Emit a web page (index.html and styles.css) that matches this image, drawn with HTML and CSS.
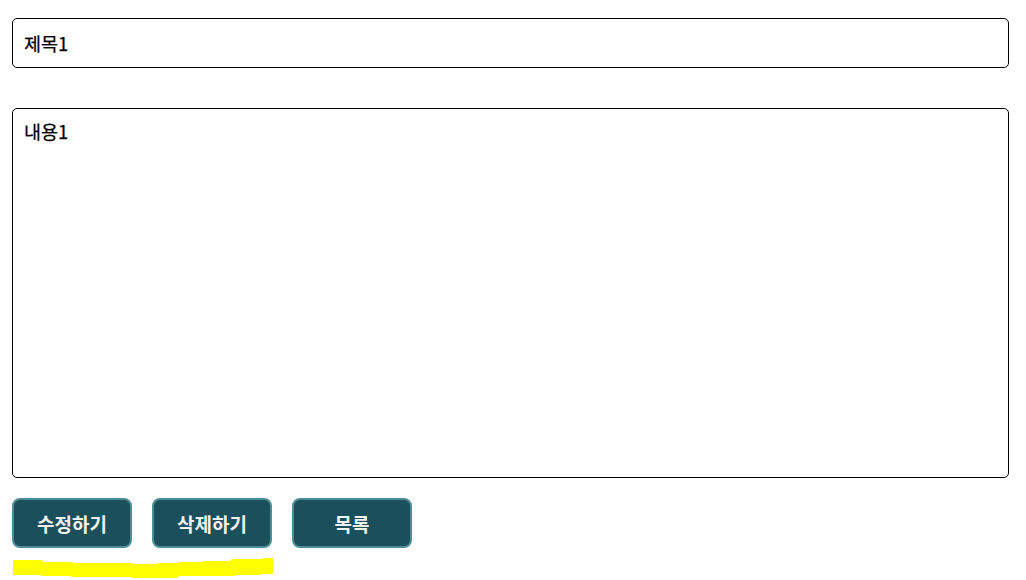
FILE: index.html
```html
<!DOCTYPE html>
<html lang="ko">
<head>
<meta charset="utf-8">
<link rel="stylesheet" href="styles.css">
</head>
<body>
<div class="page">
  <input class="title-input" type="text" value="제목1">
  <textarea class="content-input">내용1</textarea>
  <div class="actions">
    <button class="btn">수정하기</button>
    <button class="btn">삭제하기</button>
    <button class="btn">목록</button>
  </div>
  <svg class="marker" width="262" height="24" viewBox="0 0 262 24">
    <polygon fill="#ffff00" points="1,3 30,3 32,5 60,5 62,6 120,6 122,7 145,7 147,6 165,6 167,5 190,5 192,4 218,4 220,2 250,2 252,1 261,1 261,17 250,17 248,18 225,18 223,19 167,19 165,21 120,21 118,20 60,20 58,19 30,19 28,18 1,18"/>
  </svg>
</div>
</body>
</html>
```

FILE: styles.css
```css
html, body {
  margin: 0;
  padding: 0;
  background: #ffffff;
}

body {
  font-family: "Noto Sans CJK KR", "Noto Sans", sans-serif;
}

.page {
  display: flex;
  flex-direction: column;
  align-items: flex-start;
  padding: 18px 0 0 12px;
  width: 997px;
}

.title-input,
.content-input {
  box-sizing: border-box;
  width: 997px;
  border: 1px solid #000;
  border-radius: 5px;
  font-family: "Noto Sans CJK KR", "Noto Sans", sans-serif;
  font-size: 18.5px;
  font-weight: 400;
  color: #000;
  padding: 0 11px;
  margin: 0;
  outline: none;
  background: #fff;
  -webkit-text-stroke: 0.25px #000;
}

.title-input {
  height: 50px;
}

.content-input {
  height: 370px;
  margin-top: 40px;
  padding-top: 10px;
  resize: none;
  line-height: 1.4;
}

.actions {
  display: flex;
  gap: 20px;
  margin-top: 20px;
}

.btn {
  box-sizing: border-box;
  width: 120px;
  height: 50px;
  background: #1b4f5b;
  border: 2px solid #4e8d93;
  border-radius: 8px;
  color: #f2f2f2;
  font-family: "Noto Sans CJK KR", "Noto Sans", sans-serif;
  font-weight: 700;
  font-size: 19px;
  padding: 0;
}

.marker {
  display: block;
  margin-top: 9px;
}
```
